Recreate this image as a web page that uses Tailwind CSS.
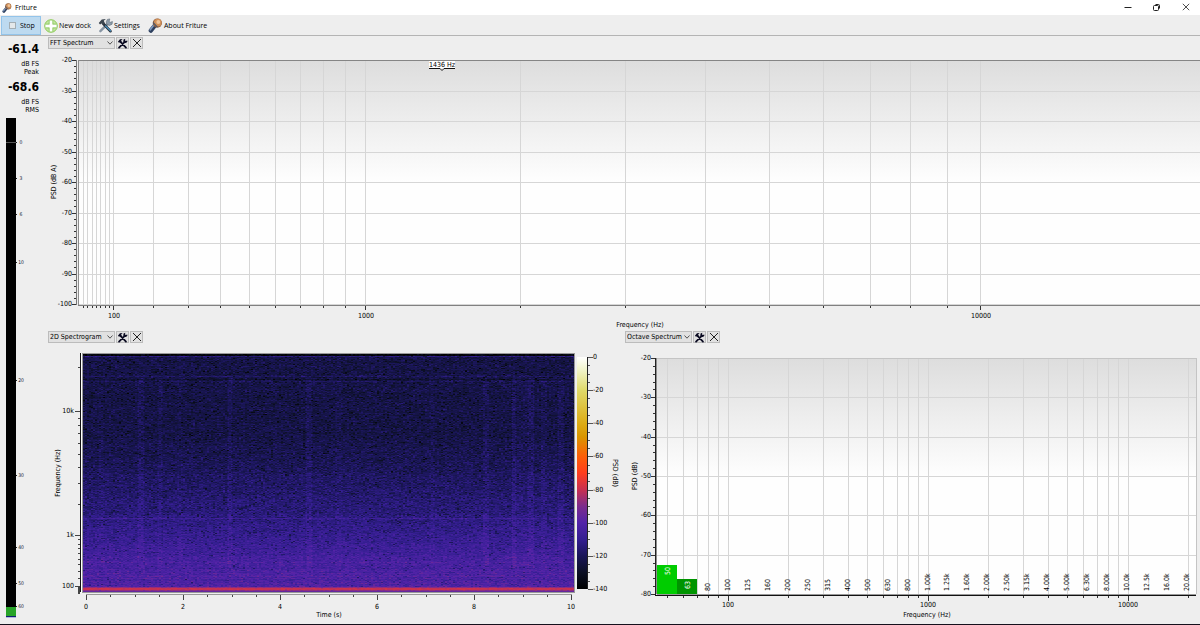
<!DOCTYPE html>
<html lang="en">
<head>
    <meta charset="UTF-8">
    <meta name="viewport" content="width=device-width, initial-scale=1.0">
    <title>Friture</title>
    <script src="https://cdn.jsdelivr.net/npm/@tailwindcss/browser@4"></script>
</head>
<body class="bg-[#eeeeee] text-black text-[7px] leading-[8px] font-['DejaVu_Sans_Condensed','DejaVu_Sans',sans-serif]">

    <!-- Shared icons -->
    <svg class="hidden">
        <symbol id="icon-mic" viewBox="0 0 16 16">
            <path d="M3 13.5 8.5 6.5" stroke="#2d3f5e" stroke-width="4.6" stroke-linecap="round"/>
            <path d="M2.4 12.6 7 6.5" stroke="#7d97bd" stroke-width="1.8" stroke-linecap="round"/>
            <circle cx="10" cy="5.4" r="4.9" fill="#8a5a3c"/>
            <circle cx="10.4" cy="5" r="4.1" fill="#cf8f58"/>
            <circle cx="11" cy="4.2" r="2.1" fill="#efc49a"/>
            <path d="M5.5 5 10 9.8" stroke="#4a5568" stroke-width="1.3"/>
        </symbol>
        <symbol id="icon-tools" viewBox="0 0 12 12">
            <path d="M2.2 10.6 8.2 4.4M9.8 10.6 3.6 4" stroke="#0b0b22" stroke-width="1.9" stroke-linecap="round" fill="none"/>
            <path d="M1 4.2 3.2 1.3 6.2 1 4.6 2.4 5 4 3.4 5.4 2.6 4.6 1.8 5z" fill="#0b0b22"/>
            <path d="M7.2 1.6 9 .8 8.8 2.6 9.6 3.2 11.2 2.6 11.3 4 9.8 5.4 7.8 5.2 6.8 3.8z" fill="#0b0b22"/>
        </symbol>
        <symbol id="icon-close" viewBox="0 0 10 10">
            <path d="M1 1 9 9M9 1 1 9" stroke="#222" stroke-width="1" fill="none"/>
        </symbol>
        <symbol id="icon-chevron" viewBox="0 0 6 4">
            <path d="M.5 .5 3 3.2 5.5 .5" stroke="#444" stroke-width=".9" fill="none"/>
        </symbol>
    </svg>

    <div class="min-h-screen flex flex-col border-b border-[#15101c]">

        <!-- Title bar -->
        <header class="h-[15px] bg-white flex items-center pl-[2px] pr-[10px]">
            <svg class="w-[10px] h-[10px] mr-[3px]"><use href="#icon-mic"/></svg>
            <h1 class="flex-1 font-['Open_Sans',sans-serif]">Friture</h1>
            <div class="flex items-center gap-[21px] pb-[2px]">
                <button aria-label="Minimize" class="w-2 h-2"><svg viewBox="0 0 8 8" class="w-2 h-2"><path d="M.5 4.5h7" stroke="#222"/></svg></button>
                <button aria-label="Restore" class="w-2 h-2"><svg viewBox="0 0 8 8" class="w-2 h-2" fill="none" stroke="#222"><rect x=".5" y="2.5" width="5" height="5" rx="1"/><path d="M2.5 1.5h3q1 0 1 1v3"/></svg></button>
                <button aria-label="Close" class="w-2 h-2"><svg class="w-2 h-2"><use href="#icon-close"/></svg></button>
            </div>
        </header>

        <!-- Toolbar -->
        <nav class="h-[21px] flex items-center pl-px border-b border-[#b4b4b4] font-['Open_Sans',sans-serif]">
            <button class="h-[19px] w-10 flex items-center gap-[4px] pl-[7px] pt-px bg-[#bddaf0] border border-[#93c4ea]">
                <svg viewBox="0 0 7 7" class="w-[7px] h-[7px]"><rect x=".5" y=".5" width="6" height="6" fill="#e4e8ea" stroke="#a3aeb4"/></svg>
                Stop
            </button>
            <button class="h-[19px] flex items-center gap-px pt-px ml-[3px]">
                <svg viewBox="0 0 14 14" class="w-[14px] h-[14px]">
                    <circle cx="7" cy="7" r="6.3" fill="#c3e6a2" stroke="#8dcb58"/>
                    <path d="M7 1.6v10.8M1.6 7h10.8" stroke="#6fb93a" stroke-width="4.4"/>
                    <path d="M7 1.4v11.2M1.4 7h11.2" stroke="#fff" stroke-width="3"/>
                </svg>
                New dock
            </button>
            <button class="h-[19px] flex items-center gap-px pt-px ml-[7px]">
                <svg viewBox="0 0 16 16" class="w-[15px] h-[15px]">
                    <path d="M2.5 14 10 6.5" stroke="#8795a3" stroke-width="2.6" stroke-linecap="round"/>
                    <path d="M10 1.5 12.6 1 11.8 3.6 13 4.6 15.4 3.8 15 6.6 12.2 8 9.4 6.8 8.8 4z" fill="#8f9dab" stroke="#566371" stroke-width=".6"/>
                    <path d="M6 6.5 13.2 14" stroke="#2b3440" stroke-width="3" stroke-linecap="round"/>
                    <path d="M8 8.4 13.4 13.8" stroke="#4c9ccc" stroke-width="1.2" stroke-linecap="round"/>
                    <path d="M.8 5.4 4 1.6 8.4 1 6.2 3 7.2 5.4 5.2 7.2 3.8 5.8 2.2 7z" fill="#3c4650"/>
                </svg>
                Settings
            </button>
            <button class="h-[19px] flex items-center gap-px pt-px ml-[8px]">
                <svg class="w-[15px] h-[15px]"><use href="#icon-mic"/></svg>
                About Friture
            </button>
        </nav>

        <div class="flex-1 flex">

            <!-- Level meter -->
            <aside class="w-[46px] flex flex-col pt-[6px] pb-[6px]">
                <div class="text-right pr-[7px]">
                    <p class="text-[12px] leading-[14px] font-bold">-61.4</p>
                    <p class="pt-1">dB FS<br>Peak</p>
                    <p class="text-[12px] leading-[14px] font-bold pt-1">-68.6</p>
                    <p class="pt-1">dB FS<br>RMS</p>
                </div>
                <div class="flex-1 relative mt-1">
                    <svg id="meter" class="absolute inset-0 w-full h-full text-[5px]"></svg>
                </div>
            </aside>

            <main class="flex-1 grid grid-rows-2">
                <section class="flex flex-col pt-px">
                    <div class="h-3 flex gap-px pl-[2px]">
                        <div class="relative w-[67px]">
                            <select aria-label="Top dock" class="appearance-none w-full h-3 pl-px bg-[#e1e1e1] border border-[#bcbcbc]">
                                <option>FFT Spectrum</option>
                                <option>2D Spectrogram</option>
                                <option>Octave Spectrum</option>
                            </select>
                            <svg class="absolute right-[2px] top-1 w-[6px] h-1 pointer-events-none"><use href="#icon-chevron"/></svg>
                        </div>
                        <button aria-label="Dock settings" class="w-[13px] h-3 flex items-center justify-center bg-[#e1e1e1] border border-[#bcbcbc]"><svg class="w-[11px] h-[11px] shrink-0"><use href="#icon-tools"/></svg></button>
                        <button aria-label="Close dock" class="w-[13px] h-3 flex items-center justify-center bg-[#e1e1e1] border border-[#bcbcbc]"><svg class="w-[10px] h-[10px] shrink-0"><use href="#icon-close"/></svg></button>
                    </div>
                    <div class="flex-1 relative">
                        <svg id="fft" class="absolute inset-0 w-full h-full"></svg>
                    </div>
                </section>

                <div class="grid grid-cols-2">
                    <section class="flex flex-col pt-px">
                        <div class="h-3 flex gap-px pl-[2px]">
                            <div class="relative w-[67px]">
                                <select aria-label="Left dock" class="appearance-none w-full h-3 pl-px bg-[#e1e1e1] border border-[#bcbcbc]">
                                    <option>2D Spectrogram</option>
                                    <option>FFT Spectrum</option>
                                    <option>Octave Spectrum</option>
                                </select>
                                <svg class="absolute right-[2px] top-1 w-[6px] h-1 pointer-events-none"><use href="#icon-chevron"/></svg>
                            </div>
                            <button aria-label="Dock settings" class="w-[13px] h-3 flex items-center justify-center bg-[#e1e1e1] border border-[#bcbcbc]"><svg class="w-[11px] h-[11px] shrink-0"><use href="#icon-tools"/></svg></button>
                            <button aria-label="Close dock" class="w-[13px] h-3 flex items-center justify-center bg-[#e1e1e1] border border-[#bcbcbc]"><svg class="w-[10px] h-[10px] shrink-0"><use href="#icon-close"/></svg></button>
                        </div>
                        <div class="flex-1 relative">
                            <svg id="spectrogram" class="absolute inset-0 w-full h-full"></svg>
                            <canvas id="waterfall" class="absolute left-[37px] top-[11px]"></canvas>
                        </div>
                    </section>

                    <section class="flex flex-col pt-px">
                        <div class="h-3 flex gap-px pl-[2px]">
                            <div class="relative w-[67px]">
                                <select aria-label="Right dock" class="appearance-none w-full h-3 pl-px bg-[#e1e1e1] border border-[#bcbcbc]">
                                    <option>Octave Spectrum</option>
                                    <option>FFT Spectrum</option>
                                    <option>2D Spectrogram</option>
                                </select>
                                <svg class="absolute right-[2px] top-1 w-[6px] h-1 pointer-events-none"><use href="#icon-chevron"/></svg>
                            </div>
                            <button aria-label="Dock settings" class="w-[13px] h-3 flex items-center justify-center bg-[#e1e1e1] border border-[#bcbcbc]"><svg class="w-[11px] h-[11px] shrink-0"><use href="#icon-tools"/></svg></button>
                            <button aria-label="Close dock" class="w-[13px] h-3 flex items-center justify-center bg-[#e1e1e1] border border-[#bcbcbc]"><svg class="w-[10px] h-[10px] shrink-0"><use href="#icon-close"/></svg></button>
                        </div>
                        <div class="flex-1 relative">
                            <svg id="octave" class="absolute inset-0 w-full h-full"></svg>
                        </div>
                    </section>
                </div>
            </main>
        </div>
    </div>

    <script>
        const mel = f => Math.log(1 + f / 700);

        // [level in dB, r, g, b]
        const colorMap = [
            [0, 255, 255, 255], [-8, 240, 243, 200], [-20, 224, 218, 105], [-40, 221, 172, 22],
            [-48, 218, 150, 0], [-60, 252, 95, 8], [-70, 255, 62, 30], [-80, 200, 48, 80],
            [-90, 125, 44, 140], [-100, 82, 35, 168], [-110, 52, 30, 145], [-120, 26, 22, 88],
            [-130, 12, 16, 36], [-140, 0, 0, 0]
        ];

        function levelToColor(db) {
            db = Math.max(-140, Math.min(0, db));
            let i = 1;
            while (i < colorMap.length - 1 && db < colorMap[i][0]) i++;
            const a = colorMap[i - 1], b = colorMap[i];
            const t = (a[0] - db) / (a[0] - b[0]);
            return [1, 2, 3].map(k => Math.round(a[k] + (b[k] - a[k]) * t));
        }

        // Wraps an svg element with a few drawing helpers
        function painter(id) {
            const svg = document.getElementById(id);
            svg.innerHTML = "";
            const box = svg.getBoundingClientRect();
            const add = (tag, attrs, content) => {
                const el = document.createElementNS("http://www.w3.org/2000/svg", tag);
                for (const k in attrs) el.setAttribute(k, attrs[k]);
                if (content !== undefined) el.textContent = content;
                svg.appendChild(el);
                return el;
            };
            return {
                w: Math.round(box.width),
                h: Math.round(box.height),
                add,
                rect: (x, y, w, h, fill) => add("rect", { x: Math.round(x), y: Math.round(y), width: w, height: h, fill }),
                text: (x, y, s, anchor = "middle", angle = 0, fill = "#000") => add("text", {
                    x: 0, y: 0, fill, "text-anchor": anchor, "dominant-baseline": "central",
                    transform: `translate(${Math.round(x)} ${Math.round(y)}) rotate(${angle})`
                }, s)
            };
        }

        // 1, 2 ... 9 steps in each decade
        function logTicks(min, max) {
            const ticks = [];
            for (let d = 10; d <= max; d *= 10)
                for (let m = 1; m < 10; m++)
                    if (d * m >= min && d * m <= max) ticks.push(d * m);
            return ticks;
        }

        function drawBackground(p, id, x0, y0, x1, y1) {
            const defs = p.add("defs", {});
            defs.innerHTML = `<linearGradient id="${id}" x1="0" y1="0" x2="0" y2="1"><stop offset="0" stop-color="#dddddd"/><stop offset=".5" stop-color="#fefefe"/></linearGradient>`;
            p.rect(x0, y0, x1 - x0, y1 - y0, `url(#${id})`);
        }

        function drawLevelAxis(p, x0, y0, x1, y1, min, axisColor) {
            const y = db => y0 + (-20 - db) / (-20 - min) * (y1 - y0);
            for (let db = -20; db >= min; db -= 2) {
                const major = db % 10 === 0;
                p.rect(x0 - (major ? 6 : 4), y(db), major ? 5 : 3, 1, "#333");
                if (major) {
                    p.rect(x0, y(db), x1 - x0, 1, "#d6d6d6");
                    p.text(x0 - 6, y(db), db, "end");
                }
            }
            p.rect(x0 - 2, y0, 1, y1 - y0 + 1, axisColor);
            return y;
        }

        function drawMeter() {
            const p = painter("meter");
            const marks = [[0, .048], [3, .12], [6, .192], [10, .287], [20, .524], [30, .714], [40, .857], [50, .929], [60, .976]];
            p.rect(6, 0, 10, p.h, "#000");
            p.rect(6, p.h * .048, 10, 1, "#555");
            for (const [label, pos] of marks) {
                p.rect(16, p.h * pos, 1, 1, "#222");
                p.text(21, p.h * pos, label, "middle", 0, "#123");
            }
            p.rect(6, p.h * .978, 10, 10, "#28a428");
            p.rect(6, p.h - 2, 10, 1, "#102070");
            p.rect(6, p.h - 1, 10, 1, "#b5b5e0");
        }

        function drawFft() {
            const p = painter("fft");
            const x0 = 32, x1 = p.w, y0 = 11, y1 = p.h - 26;
            const x = f => x0 + (mel(f) - mel(20)) / (mel(20000) - mel(20)) * (x1 - x0);
            drawBackground(p, "fft-bg", x0, y0, x1, y1);
            for (const f of logTicks(30, 19000)) {
                const major = [100, 1000, 10000].includes(f);
                p.rect(x(f), y0, 1, y1 - y0, "#d6d6d6");
                p.rect(x(f), y1 + 2, 1, major ? 4 : 2, "#333");
                if (major) p.text(x(f) + 1, y1 + 12, f);
            }
            drawLevelAxis(p, x0, y0, x1, y1, -100, "#777");
            p.rect(x0, y0, x1 - x0, 1, "#858585");
            p.rect(x0, y0, 1, y1 - y0 + 1, "#8d8d8d");
            p.rect(x0, y1 + 1, x1 - x0, 1, "#808080");
            p.text((x0 + x1) / 2 + 1, y1 + 21, "Frequency (Hz)");
            p.text(8, (y0 + y1) / 2, "PSD (dB A)", "middle", -90);

            // Peak marker
            const px = Math.round(x(1436));
            p.rect(px - 12, y0 + 1, 26, 7, "#fff");
            p.text(px + 1, y0 + 5, "1436 Hz");
            p.add("path", { d: `M${px - 12} ${y0 + 8.5}h11l2 2 2-2h11`, fill: "#fff", stroke: "#111" });
        }

        function drawWaterfall(w, h) {
            const canvas = document.getElementById("waterfall");
            canvas.width = w;
            canvas.height = h;
            const ctx = canvas.getContext("2d");
            const img = ctx.createImageData(w, h);

            let seed = 7;
            const random = () => {
                seed = (seed * 1664525 + 1013904223) % 4294967296;
                return seed / 4294967296;
            };

            // Mean level from the top of the picture to the bottom
            const profile = [[0, -123], [.12, -123], [.35, -123], [.5, -119], [.66, -114], [.8, -108], [.92, -102], [1, -99]];
            const mean = t => {
                let i = 1;
                while (i < profile.length - 1 && t > profile[i][0]) i++;
                const a = profile[i - 1], b = profile[i];
                return a[1] + (b[1] - a[1]) * (t - a[0]) / (b[0] - a[0]);
            };

            // Short sounds: position, strength, half width
            const bursts = [[.036, 2, 3], [.118, 4, 3], [.156, 3, 2], [.196, 2, 2], [.298, 4, 2], [.46, 4, 3], [.521, 2, 3],
                [.71, 2, 2], [.82, 4, 3], [.876, 4, 2], [.911, 5, 3], [.937, 3, 3], [.972, 4, 3], [.888, 2, 8]];
            const columns = Array.from({ length: w }, (_, x) =>
                bursts.reduce((sum, [pos, gain, size]) => sum + (Math.abs(x - pos * w) < size ? gain : 0), 0));

            for (let y = 0; y < h; y++) {
                const t = y / h;
                let line = (random() - .5) * (t > .85 ? 6 : 2);
                if (y < 2) line -= 12;
                if (y === 2) line += 9;
                if (y === 22 || y === 27) line += 4;
                if (y === 25) line -= 4;
                if (y === Math.round(h * .688)) line += 6;
                let level = 0;
                for (let x = 0; x < w; x++) {
                    if (x % 2 === 0) {
                        level = (random() + random() + random() - 1.5) * 6;
                        if (random() < .07) level -= 8;
                    }
                    let db = mean(t) + line + level + (t > .1 && t < .9 ? columns[x] * .7 : 0);
                    if (h - y <= 5) db = -88 + level * .4;
                    if (h - y === 3 || h - y === 4) db = -80 + level * .3;
                    if (h - y === 1) db = -96;
                    const c = levelToColor(db);
                    const i = (y * w + x) * 4;
                    img.data[i] = c[0];
                    img.data[i + 1] = c[1];
                    img.data[i + 2] = c[2];
                    img.data[i + 3] = 255;
                }
            }
            ctx.putImageData(img, 0, 0);
        }

        function drawSpectrogram() {
            const p = painter("spectrogram");
            const x0 = 37, x1 = p.w - 49, y0 = 11, y1 = p.h - 32;
            if (x1 <= x0 || y1 <= y0) return;
            p.rect(x0 - 1, y0 - 1, x1 - x0 + 2, y1 - y0 + 2, "#999");
            p.rect(x0 - 2, y0 - 1, 1, y1 - y0 + 2, "#fff");
            drawWaterfall(x1 - x0, y1 - y0);

            const y = f => y1 + 1 - (mel(f) - mel(20)) / (mel(24000) - mel(20)) * (y1 - y0);
            for (const f of logTicks(20, 20000)) {
                const major = [100, 1000, 10000].includes(f);
                p.rect(x0 - (major ? 8 : 5), y(f), major ? 5 : 2, 1, "#444");
                if (major) p.text(x0 - 9, y(f), f < 1000 ? f : f / 1000 + "k", "end");
            }
            p.rect(x0 - 3, y0 - 1, 1, y1 - y0 + 1, "#111");
            p.text(12, (y0 + y1) / 2, "Frequency (Hz)", "middle", -90);

            for (let t = 0; t <= 10; t += .5) {
                const x = x0 + 3 + t / 10 * (x1 - x0 - 6);
                p.rect(x, y1 + 3, 1, t % 2 ? 2 : 5, "#444");
                if (t % 2 === 0) p.text(x, y1 + 15, t);
            }
            p.rect(x0 + 3, y1 + 2, x1 - x0 - 5, 1, "#999");
            p.text((x0 + x1) / 2, y1 + 23, "Time (s)");

            // Colour scale
            const defs = p.add("defs", {});
            defs.innerHTML = `<linearGradient id="scale" x1="0" y1="0" x2="0" y2="1">` +
                colorMap.map(([db, r, g, b]) => `<stop offset="${-db / 140}" stop-color="rgb(${r},${g},${b})"/>`).join("") + `</linearGradient>`;
            const top = y0 + 3, bottom = y1 - 3;
            p.rect(x1 + 3, top, 10, bottom - top, "url(#scale)");
            p.rect(x1 + 13, top, 1, bottom - top, "#222");
            for (let db = 0; db >= -140; db -= 5) {
                const py = top - db / 140 * (bottom - top);
                const major = db % 20 === 0;
                p.rect(x1 + 14, py, major ? 5 : 2, 1, "#555");
                if (major) p.text(x1 + 19, py, db, "start");
            }
            p.text(x1 + 41, (y0 + y1) / 2, "PSD (dB)", "middle", 90);
        }

        function drawOctave() {
            const p = painter("octave");
            const x0 = 34, x1 = p.w - 4, y0 = 15, y1 = p.h - 30;
            const min = Math.log10(44.4), max = Math.log10(22000);
            const x = f => x0 + (Math.log10(f) - min) / (max - min) * (x1 - x0);
            drawBackground(p, "octave-bg", x0, y0, x1, y1);
            for (const f of logTicks(50, 20000)) {
                const major = [100, 1000, 10000].includes(f);
                p.rect(x(f), y0, 1, y1 - y0, "#d6d6d6");
                p.rect(x(f), y1 + 2, 1, major ? 5 : 2, "#333");
                if (major) p.text(x(f), y1 + 11, f);
            }
            const y = drawLevelAxis(p, x0, y0, x1, y1, -80, "#222");
            p.rect(x0, y0, x1 - x0, 1, "#c4c4c4");
            p.rect(x0 - 1, y0, 1, y1 - y0, "#8d8d8d");
            p.rect(x1, y0, 1, y1 - y0, "#c4c4c4");

            const bands = ["50", "63", "80", "100", "125", "160", "200", "250", "315", "400", "500", "630", "800",
                "1.00k", "1.25k", "1.60k", "2.00k", "2.50k", "3.15k", "4.00k", "5.00k", "6.30k", "8.00k",
                "10.0k", "12.5k", "16.0k", "20.0k"];
            const levels = [[-72.6, "#00cc00"], [-76.1, "#009400"]];
            const step = (x1 - x0) / bands.length;
            bands.forEach((label, i) => {
                const cx = x0 + step * (i + .5) + 1;
                if (levels[i]) {
                    const top = y(levels[i][0]);
                    p.rect(x0 + step * i, top, Math.ceil(step), Math.round(y1 - top), levels[i][1]);
                    p.text(cx, top + 2, label, "end", -90, "#fff");
                } else {
                    p.text(cx, y1 - 3, label, "start", -90);
                }
            });
            p.rect(x0, y1, x1 - x0, 1, "#999");
            p.rect(x0 - 2, y1 + 1, x1 - x0 + 2, 1, "#111");
            p.text((x0 + x1) / 2, y1 + 21, "Frequency (Hz)");
            p.text(12, (y0 + y1) / 2, "PSD (dB)", "middle", -90);
        }

        // Draw each plot again whenever its dock changes size
        const plots = { meter: drawMeter, fft: drawFft, spectrogram: drawSpectrogram, octave: drawOctave };
        const observer = new ResizeObserver(entries => {
            for (const entry of entries) plots[entry.target.firstElementChild.id]();
        });
        for (const id in plots) observer.observe(document.getElementById(id).parentElement);
    </script>
</body>
</html>
